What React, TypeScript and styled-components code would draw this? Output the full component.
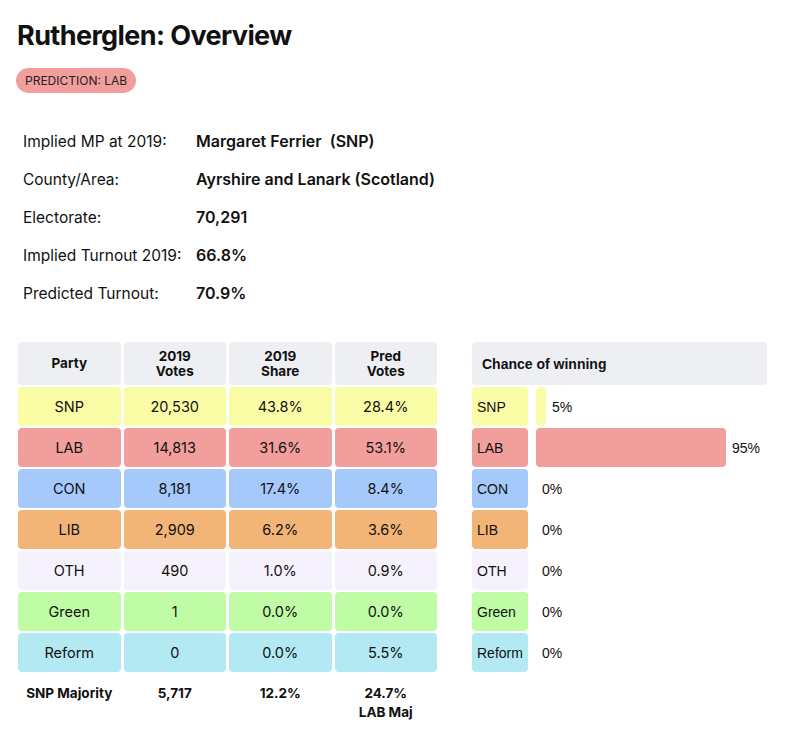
import React from "react";
import styled, { createGlobalStyle } from "styled-components";

const Global = createGlobalStyle`
  html, body { margin: 0; padding: 0; background: #fff; }
  body { font-family: Inter, "Noto Sans", sans-serif; color: #111; }
`;

const Page = styled.div`
  padding: 18px 16px 20px 17px;
`;

const Title = styled.h1`
  margin: 0;
  font-size: 27px;
  font-weight: 700;
  line-height: 36px;
  letter-spacing: -0.6px;
`;

const Badge = styled.span`
  display: inline-flex;
  align-items: center;
  margin-top: 14px;
  margin-left: -1px;
  height: 25px;
  padding: 0 9px;
  border-radius: 13px;
  background: #f29e9c;
  font-size: 12px;
  color: #222;
`;

const Info = styled.div`
  display: grid;
  grid-template-columns: 173px auto;
  margin: 29px 0 0 6px;
  font-size: 15.5px;
`;

const InfoLabel = styled.div`
  height: 38px;
  display: flex;
  align-items: center;
`;

const InfoValue = styled(InfoLabel)`
  font-weight: 600;
  font-size: 16px;
  white-space: pre;
`;

const Tables = styled.div`
  display: flex;
  gap: 35px;
  margin-top: 30px;
  margin-left: 1px;
`;

const Grid = styled.div`
  width: 419px;
  display: grid;
  grid-template-columns: repeat(4, 1fr);
  column-gap: 3px;
  row-gap: 2px;
  align-content: start;
`;

const HeadCell = styled.div`
  height: 43px;
  border-radius: 4px;
  background: #eeeff3;
  display: flex;
  align-items: center;
  justify-content: center;
  text-align: center;
  font-weight: 700;
  font-size: 13.5px;
  line-height: 15px;
`;

const Cell = styled.div<{ $bg: string }>`
  height: 39px;
  border-radius: 4px;
  background: ${(p) => p.$bg};
  display: flex;
  align-items: center;
  justify-content: center;
  font-size: 14.5px;
`;

const FootCell = styled.div`
  padding-top: 10px;
  text-align: center;
  font-weight: 700;
  font-size: 13.5px;
  line-height: 19px;
`;

const Chance = styled.div`
  width: 295px;
  display: grid;
  grid-template-columns: 56px 1fr;
  column-gap: 8px;
  row-gap: 2px;
  align-content: start;
  font-family: "Liberation Sans", Arial, sans-serif;
`;

const ChanceHead = styled.div`
  grid-column: 1 / span 2;
  height: 43px;
  border-radius: 4px;
  background: #eeeff3;
  display: flex;
  align-items: center;
  padding-left: 10px;
  font-weight: 700;
  font-size: 14px;
`;

const ChanceLabel = styled.div<{ $bg: string }>`
  height: 39px;
  border-radius: 4px;
  background: ${(p) => p.$bg};
  display: flex;
  align-items: center;
  padding-left: 5px;
  font-size: 14px;
`;

const BarRow = styled.div`
  display: flex;
  align-items: center;
  gap: 6px;
  height: 39px;
  font-size: 14px;
`;

const Bar = styled.div<{ $bg: string }>`
  height: 39px;
  border-radius: 4px;
  background: ${(p) => p.$bg};
`;

const parties = [
  { name: "SNP", bg: "#fbfda6", votes: "20,530", share: "43.8%", pred: "28.4%", chance: 5 },
  { name: "LAB", bg: "#f29e9c", votes: "14,813", share: "31.6%", pred: "53.1%", chance: 95 },
  { name: "CON", bg: "#a5c9fa", votes: "8,181", share: "17.4%", pred: "8.4%", chance: 0 },
  { name: "LIB", bg: "#f2b577", votes: "2,909", share: "6.2%", pred: "3.6%", chance: 0 },
  { name: "OTH", bg: "#f5f2fd", votes: "490", share: "1.0%", pred: "0.9%", chance: 0 },
  { name: "Green", bg: "#bffca5", votes: "1", share: "0.0%", pred: "0.0%", chance: 0 },
  { name: "Reform", bg: "#b2e9f3", votes: "0", share: "0.0%", pred: "5.5%", chance: 0 },
];

const info: [string, string][] = [
  ["Implied MP at 2019:", "Margaret Ferrier  (SNP)"],
  ["County/Area:", "Ayrshire and Lanark (Scotland)"],
  ["Electorate:", "70,291"],
  ["Implied Turnout 2019:", "66.8%"],
  ["Predicted Turnout:", "70.9%"],
];

export default function App() {
  return (
    <Page>
      <Global />
      <Title>Rutherglen: Overview</Title>
      <Badge>PREDICTION: LAB</Badge>
      <Info>
        {info.map(([l, v]) => (
          <React.Fragment key={l}>
            <InfoLabel>{l}</InfoLabel>
            <InfoValue>{v}</InfoValue>
          </React.Fragment>
        ))}
      </Info>
      <Tables>
        <Grid>
          <HeadCell>Party</HeadCell>
          <HeadCell>2019<br />Votes</HeadCell>
          <HeadCell>2019<br />Share</HeadCell>
          <HeadCell>Pred<br />Votes</HeadCell>
          {parties.map((p) => (
            <React.Fragment key={p.name}>
              <Cell $bg={p.bg}>{p.name}</Cell>
              <Cell $bg={p.bg}>{p.votes}</Cell>
              <Cell $bg={p.bg}>{p.share}</Cell>
              <Cell $bg={p.bg}>{p.pred}</Cell>
            </React.Fragment>
          ))}
          <FootCell>SNP Majority</FootCell>
          <FootCell>5,717</FootCell>
          <FootCell>12.2%</FootCell>
          <FootCell>24.7%<br />LAB Maj</FootCell>
        </Grid>
        <Chance>
          <ChanceHead>Chance of winning</ChanceHead>
          {parties.map((p) => (
            <React.Fragment key={p.name}>
              <ChanceLabel $bg={p.bg}>{p.name}</ChanceLabel>
              <BarRow>
                <Bar $bg={p.bg} style={{ width: p.chance * 2 }} />
                <span>{p.chance}%</span>
              </BarRow>
            </React.Fragment>
          ))}
        </Chance>
      </Tables>
    </Page>
  );
}
